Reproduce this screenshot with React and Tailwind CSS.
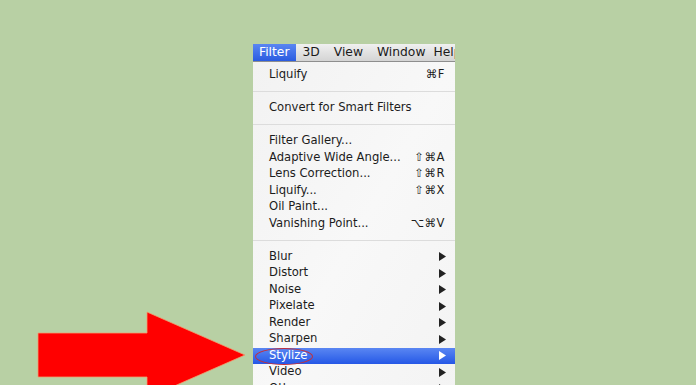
import React from "react";

const groups = [
  [{ label: "Liquify", key: "⌘F" }],
  [{ label: "Convert for Smart Filters" }],
  [
    { label: "Filter Gallery..." },
    { label: "Adaptive Wide Angle...", key: "⇧⌘A" },
    { label: "Lens Correction...", key: "⇧⌘R" },
    { label: "Liquify...", key: "⇧⌘X" },
    { label: "Oil Paint..." },
    { label: "Vanishing Point...", key: "⌥⌘V" },
  ],
  [
    { label: "Blur", sub: true },
    { label: "Distort", sub: true },
    { label: "Noise", sub: true },
    { label: "Pixelate", sub: true },
    { label: "Render", sub: true },
    { label: "Sharpen", sub: true },
    { label: "Stylize", sub: true, active: true },
    { label: "Video", sub: true },
    { label: "Other", sub: true },
  ],
];

const MenuRow = ({ item }) => (
  <div
    className={
      "relative flex items-center justify-between h-[16.5px] pl-[16px] pr-[10px] " +
      (item.active ? "bg-gradient-to-b from-[#5a86f2] to-[#2557e6] text-white" : "text-[#1c1c1c]")
    }
  >
    <span className="relative">
      {item.label}
      {item.active && (
        <span className="absolute -left-[14px] -top-[1.5px] w-[58px] h-[17px] rounded-[50%] border-[1.5px] border-[#c2303c]"></span>
      )}
    </span>
    {item.key && <span className="tracking-[0.5px]">{item.key}</span>}
    {item.sub && (
      <svg width="7" height="9" viewBox="0 0 7 9" className="mr-[-1px]">
        <path d="M0 0 L7 4.5 L0 9 Z" fill={item.active ? "#ffffff" : "#222222"} />
      </svg>
    )}
  </div>
);

const Separator = () => (
  <div className="h-[16.5px] flex items-center">
    <div className="w-full h-px bg-[#dcdcdc]"></div>
  </div>
);

export default function App() {
  return (
    <div
      className="relative w-[696px] h-[385px] overflow-hidden bg-[#b8d0a4] pl-[253px] pt-[44px]"
      style={{ fontFamily: '"DejaVu Sans", sans-serif' }}
    >
      <div className="w-[202px] text-[11.6px] leading-none">
        <div className="flex items-center h-[18px] bg-gradient-to-b from-[#f0f0f0] to-[#d4d4d4] border-b border-[#8e8e8e] text-[#1a1a1a] text-[12.3px] overflow-hidden">
          <span className="h-full flex items-center pl-[6px] pr-[7px] bg-gradient-to-b from-[#5a86f2] to-[#2a5be0] text-white">Filter</span>
          <span className="pl-[6px] pr-[14px]">3D</span>
          <span className="pr-[14px]">View</span>
          <span className="pr-[8px]">Window</span>
          <span className="whitespace-nowrap">Help</span>
        </div>
        <div className="pt-[5px] pb-[20px] bg-gradient-to-br from-[#f2f2f2] via-[#f8f8f8] to-[#f3f3f3]">
          {groups.map((g, i) => (
            <React.Fragment key={i}>
              {i > 0 && <Separator />}
              {g.map((item) => (
                <MenuRow key={item.label} item={item} />
              ))}
            </React.Fragment>
          ))}
        </div>
      </div>

      <svg className="absolute left-0 top-0" width="260" height="385" viewBox="0 0 260 385">
        <path
          d="M38 333 L147 333 L147 312 L245 355 L147 398 L147 377 L38 377 Z"
          fill="#ff0000"
          stroke="#f0a070"
          strokeWidth="0.8"
        />
      </svg>
    </div>
  );
}
